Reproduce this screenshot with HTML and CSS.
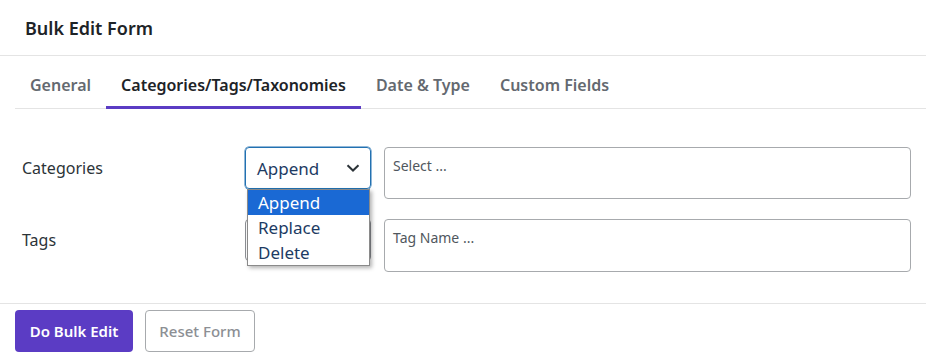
FILE: index.html
```html
<!DOCTYPE html>
<html lang="en">
<head>
    <meta charset="UTF-8">
    <meta name="viewport" content="width=device-width, initial-scale=1.0">
    <title>Bulk Edit Form</title>
    <link rel="stylesheet" href="styles.css">
</head>
<body>

    <!-- Header -->
    <div class="modal-header">
        <h2 class="modal-title">Bulk Edit Form</h2>
    </div>

    <!-- Tabs -->
    <div class="tabs">
        <span class="tab">General</span>
        <span class="tab active">Categories/Tags/Taxonomies</span>
        <span class="tab">Date &amp; Type</span>
        <span class="tab">Custom Fields</span>
    </div>

    <!-- Fields -->
    <div class="form-body">
        <div class="field-row">
            <label class="field-label">Categories</label>
            <div class="select-wrap">
                <div class="fake-select focused">
                    <span>Append</span>
                    <svg class="chevron" width="14" height="8" viewBox="0 0 14 8"><path d="M1.5 1.2 L7 6.5 L12.5 1.2" fill="none" stroke="#2c3338" stroke-width="2"/></svg>
                </div>
                <ul class="dropdown">
                    <li class="selected">Append</li>
                    <li>Replace</li>
                    <li>Delete</li>
                </ul>
            </div>
            <div class="text-box">Select ...</div>
        </div>

        <div class="field-row">
            <label class="field-label">Tags</label>
            <div class="select-wrap">
                <!-- covered by the open list above -->
                <div class="fake-select"></div>
            </div>
            <div class="text-box tall">Tag Name ...</div>
        </div>
    </div>

    <!-- Footer -->
    <div class="modal-footer">
        <button class="btn-primary">Do Bulk Edit</button>
        <button class="btn-secondary">Reset Form</button>
    </div>

</body>
</html>
```

FILE: styles.css
```css
/* Global Styles */
body {
    margin: 0;
    padding: 0;
    font-family: 'Noto Sans', 'Open Sans', sans-serif;
    background-color: #fff;
    color: #1e1e1e;
}

/* Header */
.modal-header {
    height: 55px;
    padding: 0 25px;
    display: flex;
    align-items: center;
    border-bottom: 1px solid #e4e4e4;
}

.modal-title {
    margin: 0;
    font-size: 18px;
    font-weight: 600;
    color: #1d2327;
}

/* Tabs */
.tabs {
    display: flex;
    margin-left: 15px;
    height: 52px;
    border-bottom: 1px solid #e4e4e4;
}

.tab {
    display: flex;
    align-items: center;
    padding: 7px 15px 0;
    font-size: 16px;
    font-weight: 600;
    color: #646970;
    border-bottom: 3px solid transparent;
    margin-bottom: -1px;
}

.tab.active {
    color: #1d2327;
    border-bottom-color: #5b3cc4;
}

/* Form */
.form-body {
    padding: 38px 15px 31px 22px;
    display: flex;
    flex-direction: column;
    gap: 20px;
}

.field-row {
    display: grid;
    grid-template-columns: 210px 126px 1fr;
    column-gap: 13px;
    align-items: start;
}

.field-label {
    line-height: 42px;
    font-size: 16px;
    color: #2c3338;
}

.select-wrap {
    position: relative;
}

.fake-select {
    height: 42px;
    box-sizing: border-box;
    border: 1px solid #8c8f94;
    border-radius: 4px;
    padding: 0 10px 0 11px;
    display: flex;
    align-items: center;
    justify-content: space-between;
    font-size: 17px;
    color: #1d3b63;
}

.fake-select.focused {
    border-color: #2271b1;
    box-shadow: 0 0 0 0.5px #2271b1;
}

/* Open options list */
.dropdown {
    position: absolute;
    top: 42px;
    left: 2px;
    width: 123px;
    box-sizing: border-box;
    margin: 0;
    padding: 0;
    list-style: none;
    background: #fff;
    border: 1px solid #8a8a8a;
    box-shadow: 2px 2px 4px rgba(0, 0, 0, 0.3);
    z-index: 2;
}

.dropdown li {
    height: 25px;
    line-height: 25px;
    padding-left: 10px;
    font-size: 17px;
    color: #1d3b63;
}

.dropdown li.selected {
    background-color: #1a69d4;
    color: #fff;
}

.text-box {
    height: 52px;
    box-sizing: border-box;
    border: 1px solid #a7aaad;
    border-radius: 4px;
    padding: 8px 8px 0;
    font-size: 14px;
    color: #50575e;
}

.text-box.tall {
    height: 53px;
}

/* Footer */
.modal-footer {
    border-top: 1px solid #e4e4e4;
    padding: 6px 15px;
    display: flex;
    gap: 12px;
}

.btn-primary, .btn-secondary {
    height: 42px;
    border-radius: 4px;
    font-family: inherit;
    font-size: 15px;
    font-weight: 600;
    cursor: pointer;
}

.btn-primary {
    width: 118px;
    background-color: #5b3cc4;
    border: none;
    color: #fff;
}

.btn-secondary {
    width: 110px;
    background: #fff;
    border: 1px solid #a7aaad;
    color: #8c8f94;
    font-weight: 500;
}
```
